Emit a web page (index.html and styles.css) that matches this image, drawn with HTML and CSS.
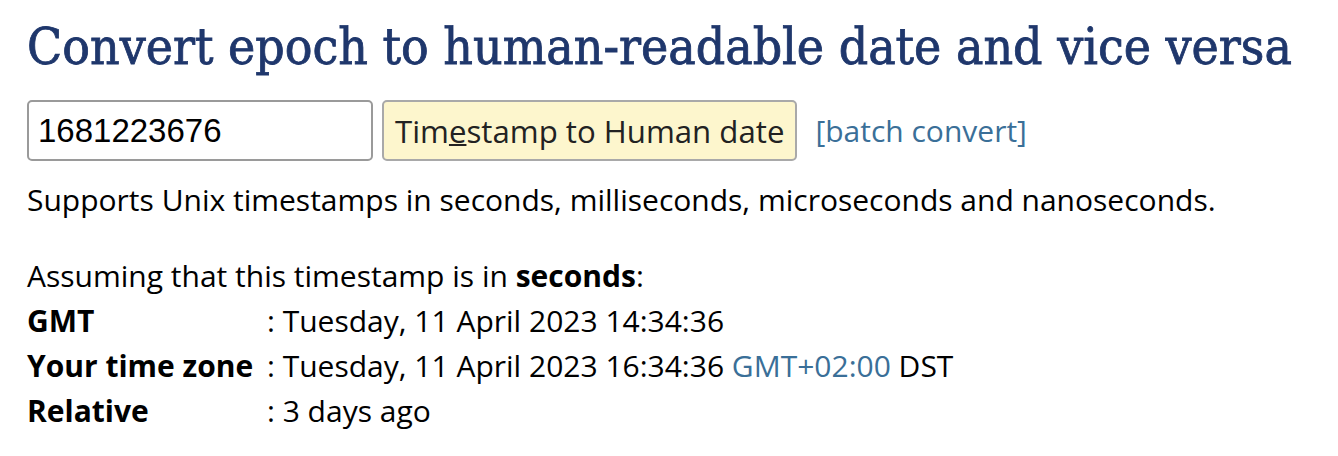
FILE: index.html
```html
<!DOCTYPE html>
<html>
<head>
<meta charset="utf-8">
<link rel="stylesheet" href="styles.css">
</head>
<body>
<div class="page">
  <h1 class="title">Convert epoch to human-readable date and vice versa</h1>
  <form class="form">
    <input class="ts-input" type="text" value="1681223676">
    <button class="ts-btn" type="button">Tim<u>e</u>stamp to Human date</button>
    <a class="link batch" href="#">[batch convert]</a>
  </form>
  <p class="note">Supports Unix timestamps in seconds, milliseconds, microseconds and nanoseconds.</p>
  <div class="result">
    <p class="assume">Assuming that this timestamp is in <b>seconds</b>:</p>
    <div class="rows">
      <div class="label">GMT</div><div class="value">: Tuesday, 11 April 2023 14:34:36</div>
      <div class="label">Your time zone</div><div class="value">: Tuesday, 11 April 2023 16:34:36 <a class="link" href="#">GMT+02:00</a> DST</div>
      <div class="label">Relative</div><div class="value">: 3 days ago</div>
    </div>
  </div>
</div>
</body>
</html>
```
FILE: styles.css
```css
html, body {
  margin: 0;
  padding: 0;
  background: #fff;
}
.page {
  padding: 16px 0 0 27px;
  font-family: "Open Sans", sans-serif;
  font-size: 30px;
  color: #000;
}
.title {
  margin: 0;
  font-family: "DejaVu Serif", serif;
  font-stretch: condensed;
  font-weight: normal;
  font-size: 51.2px;
  line-height: 60px;
  color: #1f376c;
  -webkit-text-stroke: 0.8px #1f376c;
}
.form {
  display: flex;
  align-items: center;
  margin-top: 24px;
}
.ts-input {
  box-sizing: border-box;
  width: 346px;
  height: 61px;
  border: 2px solid #9a9a9a;
  border-radius: 5px;
  padding: 0 9px;
  font-family: "Liberation Sans", Arial, sans-serif;
  font-size: 33px;
  color: #000;
  margin: 0;
}
.ts-btn {
  box-sizing: border-box;
  height: 61px;
  margin: 0 0 0 9px;
  padding: 0 11px;
  border: 2px solid #a9a9a9;
  border-radius: 5px;
  background: #fdf6cd;
  font-family: "Open Sans", sans-serif;
  font-size: 31.2px;
  color: #222;
}
.ts-btn u {
  text-decoration-thickness: 2px;
}
.link {
  color: #3a6f98;
  text-decoration: none;
}
.batch {
  margin-left: 18px;
}
.note {
  margin: 18px 0 0;
  line-height: 42px;
}
.result {
  margin-top: 32px;
}
.assume {
  margin: 0;
  line-height: 45px;
}
.rows {
  display: grid;
  grid-template-columns: 240px auto;
  grid-auto-rows: 45px;
  align-items: center;
}
.label {
  font-weight: bold;
  white-space: nowrap;
}
```
